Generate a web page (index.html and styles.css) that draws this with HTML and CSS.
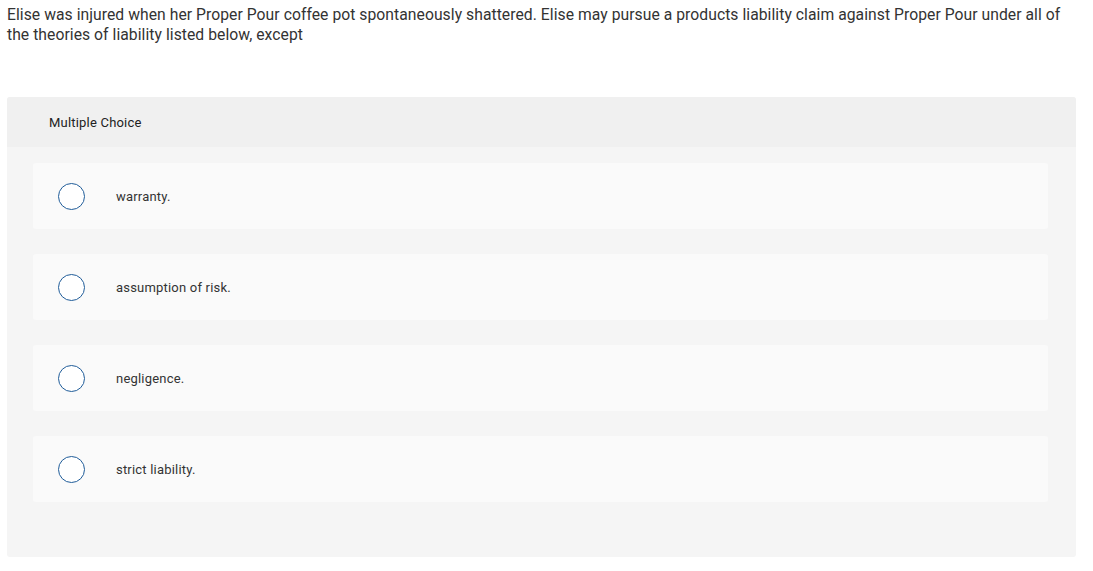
FILE: index.html
```html
<!DOCTYPE html>
<html>
<head>
<meta charset="utf-8">
<link rel="stylesheet" href="styles.css">
</head>
<body>
<div class="page">
  <p class="question">Elise was injured when her Proper Pour coffee pot spontaneously shattered. Elise may pursue a products liability claim against Proper Pour under all of the theories of liability listed below, except</p>
  <div class="panel">
    <div class="panel-head">Multiple Choice</div>
    <div class="panel-body">
      <div class="option"><span class="radio"></span><span class="label">warranty.</span></div>
      <div class="option"><span class="radio"></span><span class="label">assumption of risk.</span></div>
      <div class="option"><span class="radio"></span><span class="label">negligence.</span></div>
      <div class="option"><span class="radio"></span><span class="label">strict liability.</span></div>
    </div>
  </div>
</div>
</body>
</html>
```
FILE: styles.css
```css
html, body {
  margin: 0;
  padding: 0;
  background: #ffffff;
}
.page {
  padding: 5px 17px 0 7px;
  font-family: Roboto, "Liberation Sans", sans-serif;
  color: #333333;
}
.question {
  margin: 0;
  font-size: 15.7px;
  letter-spacing: 0.05px;
  line-height: 20px;
  color: #333;
}
.panel {
  margin-top: 52px;
  background: #f5f5f5;
  border-radius: 3px;
  overflow: hidden;
}
.panel-head {
  background: #f0f0f0;
  height: 50px;
  padding-left: 42px;
  display: flex;
  align-items: center;
  font-size: 13px;
  letter-spacing: 0.2px;
  color: #222;
}
.panel-body {
  padding: 16px 28px 55px 26px;
  display: flex;
  flex-direction: column;
  gap: 25px;
}
.option {
  background: #fafafa;
  border-radius: 3px;
  height: 66px;
  display: flex;
  align-items: center;
  padding-left: 25px;
}
.radio {
  width: 25px;
  height: 25px;
  border: 1.5px solid #1f5c99;
  border-radius: 50%;
  background: #fff;
  flex: none;
}
.label {
  margin-left: 31px;
  font-size: 13px;
  letter-spacing: 0.2px;
  color: #333;
}
```
